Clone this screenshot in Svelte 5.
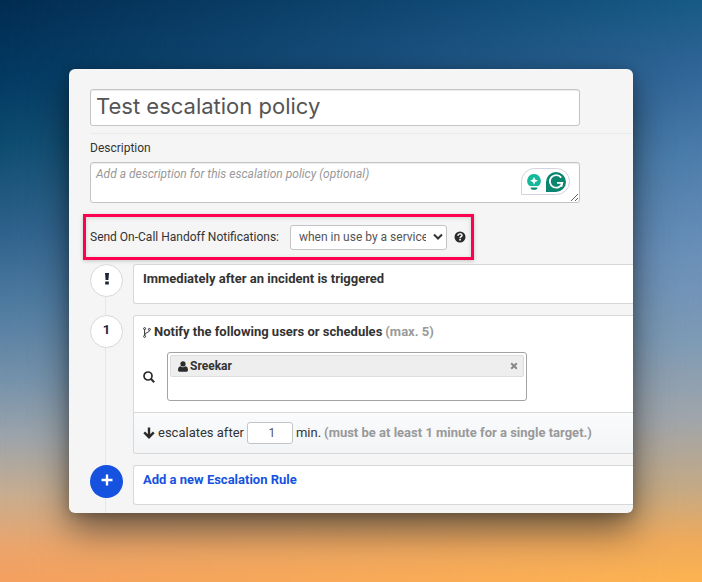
<script lang="ts">
  let name = $state('Test escalation policy');
  let description = $state('');
  let handoff = $state('in_use');
  let delay = $state('1');
  let search = $state('');
  let targets = $state(['Sreekar']);

  function removeTarget(target: string) {
    targets = targets.filter((item) => item !== target);
  }
</script>

<main class="page">
  <form class="panel" onsubmit={(event) => event.preventDefault()}>
    <header class="title">
      <input class="name" type="text" aria-label="Escalation policy name" bind:value={name} />
    </header>

    <label class="description-label" for="description">Description</label>
    <div class="description">
      <textarea id="description" placeholder="Add a description for this escalation policy (optional)" bind:value={description}></textarea>
      <div class="assistant">
        <button type="button" aria-label="Writing suggestions">
          <svg width="16" height="18" viewBox="0 0 16 18">
            <path d="M8 1a6.800 6.800 0 0 0-4 12.300h8A6.800 6.800 0 0 0 8 1z" fill="#15b898" />
            <path d="M8 3.800 9.200 6.600 12 7.800 9.200 9 8 11.800 6.800 9 4 7.800 6.800 6.600z" fill="#fff" />
            <path d="M4 13.200h8v1.200H4z" fill="#fff" />
            <path d="M4.500 14.600h7c-.3 1.500-1 2.200-2 2.200h-3c-1 0-1.700-.7-2-2.200z" fill="#0c8a72" />
          </svg>
        </button>
        <button type="button" aria-label="Check writing">
          <svg width="20" height="20" viewBox="0 0 20 20">
            <path d="M10 0a10 10 0 0 1 0 20H0V10A10 10 0 0 1 10 0z" fill="#0b8570" />
            <path d="M15.200 5.600A6.300 6.300 0 1 0 16.300 10.800H11M16.300 10.800l-.9 4" fill="none" stroke="#fff" stroke-width="1.800" />
          </svg>
        </button>
      </div>
    </div>

    <div class="handoff">
      <label for="handoff">Send On-Call Handoff Notifications:</label>
      <div class="select">
        <select id="handoff" bind:value={handoff}>
          <option value="in_use">when in use by a service</option>
          <option value="always">always</option>
        </select>
        <svg width="10" height="8" viewBox="0 0 10 8" aria-hidden="true">
          <path d="M1 1.500 5 5.500 9 1.500" fill="none" stroke="#333" stroke-width="2" />
        </svg>
      </div>
      <button class="help" type="button" aria-label="Help">
        <svg width="12" height="12" viewBox="0 0 12 12">
          <circle cx="6" cy="6" r="5.500" fill="#2b2b2b" />
          <path d="M4 4.700C4.100 2.300 8 2.300 8 4.500 8 5.800 6.100 5.700 6.100 7.200" fill="none" stroke="#fff" stroke-width="1.500" />
          <path d="M5.300 8h1.600v1.500H5.300z" fill="#fff" />
        </svg>
      </button>
    </div>

    <ol class="rules">
      <li>
        <span class="marker">
          <svg width="6" height="14" viewBox="0 0 6 14" aria-label="Start">
            <path d="M1 1h4l-.6 7H1.600zM1.200 9.500h3.600v3H1.200z" fill="#1c2536" />
          </svg>
        </span>
        <section class="card short">
          <h2>Immediately after an incident is triggered</h2>
        </section>
      </li>

      <li>
        <span class="marker">1</span>
        <section class="card">
          <div class="rule">
            <h2>
              <svg width="8" height="11" viewBox="0 0 8 11" aria-hidden="true">
                <g fill="none" stroke="#333" stroke-width="1">
                  <circle cx="1.600" cy="1.600" r="1" />
                  <circle cx="1.600" cy="9.400" r="1" />
                  <circle cx="6.400" cy="2.400" r="1" />
                  <path d="M1.600 2.600v5.800M6.400 3.400c0 2.600-4.400 1.800-4.600 4.400" />
                </g>
              </svg>
              Notify the following users or schedules <span>(max. 5)</span>
            </h2>
            <div class="targets">
              <svg width="12" height="12" viewBox="0 0 12 12" aria-hidden="true">
                <circle cx="5" cy="5" r="4" fill="none" stroke="#2b2b2b" stroke-width="1.700" />
                <path d="M7.800 7.800l3.400 3.400" stroke="#2b2b2b" stroke-width="2" />
              </svg>
              <div class="picker">
                {#each targets as target}
                  <div class="target">
                    <svg width="10" height="11" viewBox="0 0 10 11" aria-hidden="true">
                      <circle cx="5" cy="2.900" r="2.600" fill="#2b2b2b" />
                      <path d="M2.400 5.200c1.500 1.300 3.700 1.300 5.200 0C9.300 5.400 10 7 10 9c0 1-.6 1.700-1.500 1.700h-7C.6 10.700 0 10 0 9c0-2 .7-3.600 2.400-3.800z" fill="#2b2b2b" />
                    </svg>
                    <span>{target}</span>
                    <button type="button" aria-label={`Remove ${target}`} onclick={() => removeTarget(target)}>
                      <svg width="8" height="8" viewBox="0 0 8 8">
                        <path d="M1.200 1.200l5.600 5.600M6.800 1.200 1.200 6.800" stroke="#888" stroke-width="2" />
                      </svg>
                    </button>
                  </div>
                {/each}
                <input type="text" aria-label="Search users or schedules" bind:value={search} />
              </div>
            </div>
          </div>
          <div class="delay">
            <svg width="12" height="12" viewBox="0 0 12 12" aria-hidden="true">
              <path d="M6 .5v9M1.200 5.400 6 10.200l4.800-4.800" fill="none" stroke="#2b2b2b" stroke-width="2.400" />
            </svg>
            <label for="delay">escalates after</label>
            <input id="delay" type="text" inputmode="numeric" bind:value={delay} />
            <span>min.</span>
            <strong>(must be at least 1 minute for a single target.)</strong>
          </div>
        </section>
      </li>

      <li>
        <button class="marker add" type="button" aria-label="Add rule">
          <svg width="12" height="12" viewBox="0 0 12 12">
            <path d="M6 .5v11M.5 6h11" stroke="#fff" stroke-width="2.400" />
          </svg>
        </button>
        <section class="card short">
          <h2><a href="#new-rule">Add a new Escalation Rule</a></h2>
        </section>
      </li>
    </ol>
  </form>
</main>

<style>
  :global(body) {
    margin: 0;
  }

  .page {
    position: relative;
    isolation: isolate;
    box-sizing: border-box;
    min-height: 100vh;
    padding: 69px;
    background: linear-gradient(180deg, #022c52 0%, #043c64 15%, #0e4c70 25%, #2f628c 40%, #4d7aa0 52%, #7391ab 65%, #9ca4ab 75%, #c8ad90 85%, #eba56c 94%, #f5a05f 100%);
    color: #333;
    font-family: Roboto, "Liberation Sans", sans-serif;
    font-size: 12px;
    line-height: 16px;
  }

  .page::before {
    position: absolute;
    z-index: -1;
    inset: 0;
    background: linear-gradient(180deg, #175a86 0%, #34689b 14%, #4f7fac 28%, #6b90b9 44%, #7d9ab5 58%, #a0a5aa 72%, #c4a984 84%, #efaa5a 93%, #fcb350 100%);
    content: '';
    mask-image: linear-gradient(90deg, transparent, #000);
  }

  input,
  select,
  textarea,
  button {
    box-sizing: border-box;
    margin: 0;
    font: inherit;
  }

  button {
    display: grid;
    place-items: center;
    border: 0;
    background: none;
    padding: 0;
    cursor: pointer;
  }

  svg {
    display: block;
    flex: none;
  }

  .panel {
    overflow: hidden;
    border-radius: 6px;
    background: #f5f5f5;
    box-shadow: 0 16px 36px rgba(0, 0, 0, 0.5), 0 2px 12px rgba(0, 0, 0, 0.2);
    padding: 20px 0 8px 21px;
  }

  .title {
    border-bottom: 1px solid #ebebeb;
    padding-bottom: 7px;
  }

  .name,
  .description {
    width: calc(100% - 53px);
  }

  .name {
    display: block;
    height: 37px;
    border: 1px solid #c4c4c4;
    border-radius: 3px;
    background: #fff;
    box-shadow: inset 0 1px 1px rgba(0, 0, 0, 0.08);
    padding: 0 5px 4px;
    color: #555;
    font-family: Inter, "Liberation Sans", sans-serif;
    font-size: 22px;
  }

  .description-label {
    display: block;
    padding: 6px 0;
  }

  .description {
    position: relative;
  }

  textarea {
    display: block;
    width: 100%;
    height: 41px;
    border: 1px solid #c4c4c4;
    border-radius: 3px;
    background: #fff;
    box-shadow: inset 0 1px 1px rgba(0, 0, 0, 0.08);
    padding: 3px 5px;
  }

  textarea::placeholder {
    color: #999;
    font-style: italic;
  }

  .assistant {
    position: absolute;
    top: 6px;
    right: 10px;
    display: flex;
    box-sizing: border-box;
    align-items: center;
    gap: 4px;
    width: 49px;
    height: 27px;
    border: 1px solid #d2d3e0;
    border-radius: 14px 14px 14px 0;
    background: #fff;
    padding-left: 4px;
  }

  .handoff {
    display: flex;
    box-sizing: border-box;
    align-items: center;
    width: fit-content;
    height: 46px;
    border: 3px solid #ff0050;
    box-shadow: 0 1px 4px rgba(0, 0, 0, 0.2), inset 0 1px 4px rgba(0, 0, 0, 0.15);
    margin: 11px 0 4px -7px;
    padding: 0 5px 0 4px;
  }

  .select {
    display: grid;
    align-items: center;
    margin: 0 7px 0 11px;
  }

  .select > * {
    grid-area: 1 / 1;
  }

  .select svg {
    justify-self: end;
    margin-right: 4px;
    pointer-events: none;
  }

  select {
    width: 157px;
    height: 25px;
    border: 1px solid #c4c4c4;
    border-radius: 3px;
    background: #fff;
    padding: 0 20px 0 8px;
    color: #555;
    appearance: none;
  }

  .rules {
    display: grid;
    gap: 11px;
    background: linear-gradient(#e6e6e6, #e6e6e6) 15px 0 / 1px 100% no-repeat;
    margin: 0 0 -8px;
    padding: 0 0 8px;
    list-style: none;
  }

  li {
    display: grid;
    grid-template-columns: 33px 1fr;
    align-items: start;
    gap: 10px;
  }

  .marker {
    display: grid;
    box-sizing: border-box;
    width: 33px;
    height: 33px;
    border: 1px solid #d8d8d8;
    border-radius: 50%;
    background: #fff;
    place-items: center;
    padding-bottom: 3px;
    color: #1c2536;
    font-size: 13px;
    font-weight: 700;
  }

  .add {
    border: 0;
    background: #1652e0;
  }

  .card {
    min-width: 0;
    border: 1px solid #d8d8d8;
    border-right: 0;
    border-radius: 3px 0 0 3px;
    background: #fff;
  }

  .short {
    box-sizing: border-box;
    min-height: 40px;
    padding: 6px 9px;
  }

  h2 {
    display: flex;
    align-items: center;
    gap: 3px;
    margin: 0;
    font-size: 13px;
    font-weight: 700;
  }

  h2 span,
  strong {
    color: #999;
    font-weight: 700;
  }

  a {
    color: #1652e0;
    text-decoration: none;
  }

  .rule {
    padding: 8px 9px 11px;
  }

  .targets {
    display: flex;
    align-items: center;
    gap: 12px;
    margin-top: 12px;
  }

  .picker {
    box-sizing: border-box;
    width: 360px;
    height: 49px;
    border: 1px solid #a3a3a3;
    border-radius: 3px;
    padding: 2px;
  }

  .target {
    display: flex;
    box-sizing: border-box;
    align-items: center;
    gap: 2px;
    height: 22px;
    border: 1px solid #ddd;
    border-radius: 2px;
    background: #eee;
    padding: 0 5px 0 7px;
    font-weight: 700;
  }

  .target button {
    margin-left: auto;
  }

  .picker input {
    display: block;
    width: 100%;
    height: 20px;
    border: 0;
    background: none;
    outline: none;
    padding: 0 4px;
  }

  .delay {
    display: flex;
    align-items: center;
    gap: 3px;
    border-top: 1px solid #d8d8d8;
    border-radius: 0 0 0 3px;
    background: linear-gradient(#fafbfc, #f2f4f6);
    padding: 9px;
    font-size: 13px;
  }

  .delay input {
    width: 46px;
    height: 22px;
    border: 1px solid #c4c4c4;
    border-radius: 3px;
    background: #fff;
    padding: 0 2px 0 6px;
    color: #555;
    font-size: 12px;
    text-align: center;
  }
</style>
